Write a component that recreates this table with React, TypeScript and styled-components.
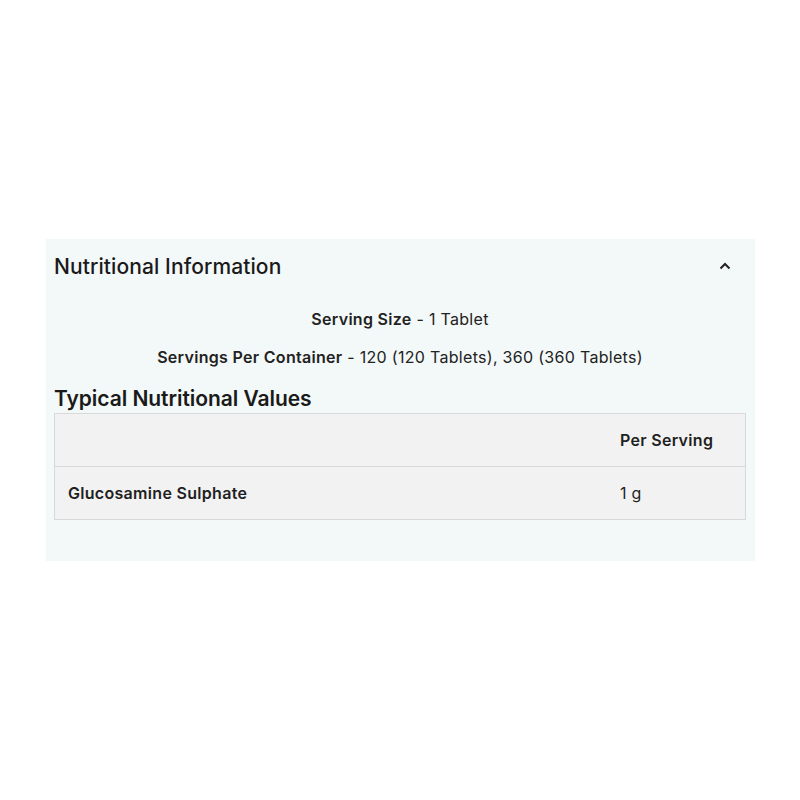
import React from "react";
import styled, { createGlobalStyle } from "styled-components";

const Global = createGlobalStyle`
  html, body { margin: 0; padding: 0; background: #ffffff; }
  body { font-family: "Inter", "Lato", sans-serif; color: #1c1c1c; }
`;

const Page = styled.div`
  width: 800px;
  height: 800px;
  display: flex;
  flex-direction: column;
  padding-top: 239px;
  box-sizing: border-box;
`;

const Panel = styled.section`
  margin-left: 46px;
  width: 709px;
  background: #f3f8f8;
  padding: 0 9px 41px 8px;
  box-sizing: border-box;
`;

const Header = styled.div`
  display: flex;
  align-items: center;
  justify-content: space-between;
  height: 54px;
`;

const Title = styled.h2`
  margin: 0;
  font-size: 21px;
  font-weight: 500;
  letter-spacing: 0.1px;
  color: #1a1a1a;
`;

const Toggle = styled.button`
  border: 0;
  background: transparent;
  padding: 0;
  margin-right: 13px;
  width: 16px;
  height: 16px;
  display: flex;
  align-items: center;
  justify-content: center;
  color: #222;
`;

const InfoLine = styled.p`
  margin: 0;
  text-align: center;
  font-size: 16px;
  line-height: 20px;
  letter-spacing: 0.3px;
  color: #222;
  & + & { margin-top: 18px; }
  &:first-of-type { margin-top: 16px; }
  b { font-weight: 600; }
`;

const SubTitle = styled.h3`
  margin: 20px 0 0 0;
  font-size: 21px;
  line-height: 24px;
  font-weight: 600;
  letter-spacing: -0.05px;
  color: #1a1a1a;
`;

const Table = styled.div`
  margin-top: 2px;
  border: 1px solid #d9d9d9;
  background: #f2f2f2;
`;

const Row = styled.div<{ $last?: boolean }>`
  display: grid;
  grid-template-columns: 1fr 138px;
  height: 52px;
  align-items: center;
  border-bottom: ${(p) => (p.$last ? "none" : "1px solid #d9d9d9")};
`;

const Cell = styled.div<{ $strong?: boolean }>`
  padding-left: 13px;
  font-size: 16px;
  letter-spacing: 0.3px;
  font-weight: ${(p) => (p.$strong ? 600 : 400)};
  color: #1f1f1f;
`;

export default function App() {
  return (
    <>
      <Global />
      <Page>
        <Panel>
          <Header>
            <Title>Nutritional Information</Title>
            <Toggle aria-label="collapse">
              <svg width="12" height="8" viewBox="0 0 12 8" fill="none">
                <path d="M1.5 6.5 L6 2 L10.5 6.5" stroke="#222" strokeWidth="2" />
              </svg>
            </Toggle>
          </Header>
          <InfoLine>
            <b>Serving Size</b> - 1 Tablet
          </InfoLine>
          <InfoLine>
            <b>Servings Per Container</b> - 120 (120 Tablets), 360 (360 Tablets)
          </InfoLine>
          <SubTitle>Typical Nutritional Values</SubTitle>
          <Table>
            <Row>
              <Cell />
              <Cell $strong>Per Serving</Cell>
            </Row>
            <Row $last>
              <Cell $strong>Glucosamine Sulphate</Cell>
              <Cell>1 g</Cell>
            </Row>
          </Table>
        </Panel>
      </Page>
    </>
  );
}
